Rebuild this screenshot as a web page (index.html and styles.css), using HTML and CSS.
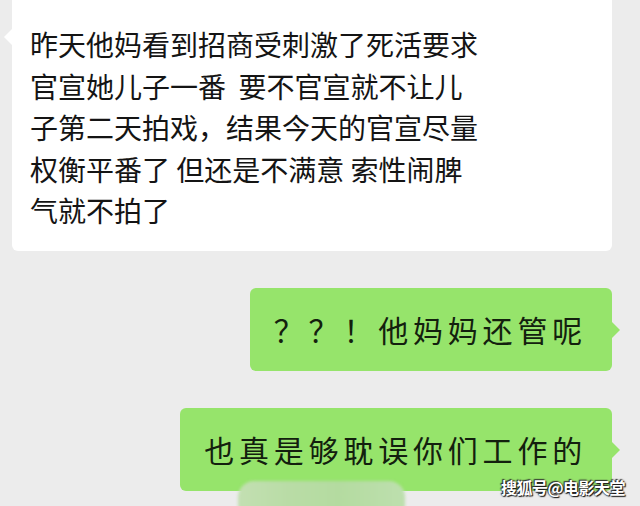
FILE: index.html
```html
<!DOCTYPE html>
<html>
  <head>
    <meta charset="utf-8">
    <link rel="stylesheet" href="styles.css">
  </head>
  <body>
    <div id="chat">
      <div class="bubble them">
        <p class="text">昨天他妈看到招商受刺激了死活要求官宣她儿子一番&nbsp;&nbsp;要不官宣就不让儿子第二天拍戏，结果今天的官宣尽量权衡平番了 但还是不满意 索性闹脾气就不拍了</p>
      </div>
      <div class="bubble me">
        <p class="text">？？！他妈妈还管呢</p>
      </div>
      <div class="bubble me">
        <p class="text">也真是够耽误你们工作的</p>
      </div>
    </div>
    <div class="smudge"></div>
    <div class="mark">搜狐号@电影天堂</div>
  </body>
</html>
```

FILE: styles.css
```css
      html, body {
        margin: 0;
        height: 100%;
      }

      body {
        background: #ececec;
        overflow: hidden;
        position: relative;
        font-family: "Noto Sans CJK SC", "Noto Sans", sans-serif;
      }

      #chat {
        display: flex;
        flex-direction: column;
        gap: 37px;
        padding: 0 28px 0 12px;
      }

      .bubble {
        position: relative;
        border-radius: 6px;
      }

      .bubble::before {
        content: "";
        position: absolute;
        border: 8px solid transparent;
      }

      .text {
        margin: 0;
      }

      /* incoming, white */
      .them {
        background: #fff;
        width: 600px;
        box-sizing: border-box;
        padding: 24px 0 19px 18px;
        border-radius: 0 0 6px 6px;
      }

      .them::before {
        left: -16px;
        top: 29px;
        border-right-color: #fff;
      }

      .them .text {
        width: 452px;
        font-size: 28px;
        line-height: 41.5px;
        color: #141414;
      }

      /* outgoing, green */
      .me {
        align-self: flex-end;
        background: #96e46b;
        padding: 21px 25px 22px 24px;
      }

      .me::before {
        right: -16px;
        top: 34px;
        border-left-color: #96e46b;
      }

      .me .text {
        font-size: 30px;
        line-height: 40px;
        letter-spacing: 4.8px;
        color: #13200e;
      }

      /* pixelated leftover of a cut-off bubble */
      .smudge {
        position: absolute;
        left: 238px;
        top: 481px;
        width: 167px;
        height: 40px;
        border-radius: 16px;
        background: linear-gradient(90deg, #c3dfb2 0%, #b9dca6 30%, #b4dba0 60%, #bddfae 100%);
        filter: blur(1.5px);
      }

      .mark {
        position: absolute;
        right: 15px;
        top: 475px;
        font-size: 16px;
        font-weight: bold;
        color: #fff;
        letter-spacing: -0.5px;
        text-shadow: 0 0 2px #222, 1px 1px 1px #111, -1px -1px 1px #333;
      }
```
